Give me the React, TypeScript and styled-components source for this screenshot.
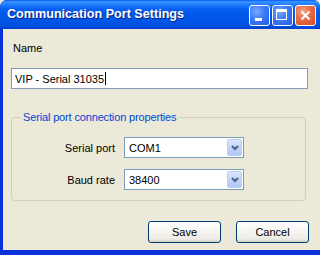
import React from 'react';
import styled, { createGlobalStyle } from 'styled-components';

const GlobalStyle = createGlobalStyle`
  html, body {
    margin: 0;
    padding: 0;
    background: #ece9d8;
  }
  body {
    font-family: Tahoma, "Liberation Sans", Arial, sans-serif;
    font-size: 11px;
  }
`;

const Window = styled.div`
  width: 320px;
  height: 255px;
  display: flex;
  flex-direction: column;
  overflow: hidden;
  background: #0831d9;
  border-radius: 7px 7px 0 0;
`;

const TitleBar = styled.div`
  height: 29px;
  flex: none;
  display: flex;
  align-items: center;
  padding: 0 4px 0 7px;
  background: linear-gradient(
    to bottom,
    #0058ee 0%,
    #3d93ff 6%,
    #2886ff 12%,
    #0a62f4 28%,
    #0058ea 50%,
    #0055e5 75%,
    #0050de 90%,
    #003dd2 100%
  );
`;

const Title = styled.div`
  flex: 1;
  color: #fff;
  font-family: "Liberation Sans", Arial, sans-serif;
  font-weight: bold;
  font-size: 12.6px;
  text-shadow: 1px 1px 0 #0a1e80;
  padding-bottom: 1px;
`;

const Controls = styled.div`
  display: flex;
  gap: 2px;
  margin-top: 1px;
`;

const CaptionButton = styled.div<{ $close?: boolean }>`
  position: relative;
  width: 21px;
  height: 21px;
  box-sizing: border-box;
  border: 1px solid #fff;
  border-radius: 3px;
  background: ${p =>
    p.$close
      ? 'radial-gradient(circle at 35% 30%, #f5a587 0%, #e66b43 45%, #d8491f 100%)'
      : 'radial-gradient(circle at 35% 30%, #7aa8ff 0%, #3b7bf7 45%, #2457e6 100%)'};
  display: flex;
  align-items: center;
  justify-content: center;
`;

const MinGlyph = styled.div`
  position: absolute;
  left: 5px;
  top: 12px;
  width: 7px;
  height: 3px;
  background: #fff;
`;

const MaxGlyph = styled.div`
  position: absolute;
  left: 3px;
  top: 3px;
  width: 11px;
  height: 11px;
  box-sizing: border-box;
  border: 1px solid #fff;
  border-top-width: 3px;
`;

const Body = styled.div`
  flex: 1;
  display: flex;
  flex-direction: column;
  margin: 0 0 5px 3px;
  padding: 13px 12px 0 8px;
  background: #ece9d8;
`;

const Label = styled.label`
  display: block;
  line-height: 13px;
  padding-left: 2px;
  color: #000;
`;

const TextBox = styled.div`
  margin-top: 13px;
  height: 21px;
  box-sizing: border-box;
  border: 1px solid #7f9db9;
  background: #fff;
  display: flex;
  align-items: center;
  padding-left: 3px;
  font-size: 11px;
  color: #000;
`;

const Caret = styled.span`
  display: inline-block;
  width: 1px;
  height: 13px;
  background: #000;
  margin-left: 1px;
`;

const GroupBox = styled.fieldset`
  margin: 22px 2px 0 0;
  padding: 13px 0 0 0;
  height: 90px;
  box-sizing: border-box;
  border: 1px solid #d0d0bf;
  border-radius: 4px;
`;

const Legend = styled.legend`
  color: #0046d5;
  padding: 0 2px;
  margin-left: 9px;
  line-height: 13px;
  letter-spacing: -0.15px;
`;

const FieldGrid = styled.div`
  display: grid;
  grid-template-columns: 103px 120px;
  column-gap: 9px;
  row-gap: 11px;
  align-items: center;
`;

const FieldLabel = styled.span`
  text-align: right;
  color: #000;
`;

const Combo = styled.div`
  height: 21px;
  box-sizing: border-box;
  border: 1px solid #7f9db9;
  background: #fff;
  display: flex;
  align-items: center;
  padding: 1px;
`;

const ComboText = styled.span`
  flex: 1;
  padding-left: 3px;
  color: #000;
`;

const DropButton = styled.div`
  width: 15px;
  height: 17px;
  box-sizing: border-box;
  border: 1px solid #bacdf6;
  border-radius: 2px;
  background: linear-gradient(to bottom, #dce6fd 0%, #c4d5fb 45%, #b2c8f8 100%);
  display: flex;
  align-items: center;
  justify-content: center;
`;

const Footer = styled.div`
  display: flex;
  justify-content: flex-end;
  gap: 15px;
  margin-top: 20px;
  margin-right: -1px;
`;

const Button = styled.button`
  width: 73px;
  height: 22px;
  box-sizing: border-box;
  border: 1px solid #003c74;
  border-radius: 3px;
  background: linear-gradient(to bottom, #ffffff 0%, #f5f4ef 50%, #ecebe6 85%, #d6d0c5 100%);
  font-family: Tahoma, "Liberation Sans", Arial, sans-serif;
  font-size: 11px;
  color: #000;
  padding: 0;
`;

const Chevron = () => (
  <svg width="8" height="6" viewBox="0 0 8 6">
    <path d="M1 1 L4 4 L7 1" fill="none" stroke="#4d6185" strokeWidth="2" />
  </svg>
);

const CloseGlyph = () => (
  <svg width="11" height="11" viewBox="0 0 11 11">
    <path d="M1.5 1.5 L9.5 9.5 M9.5 1.5 L1.5 9.5" stroke="#fff" strokeWidth="2" />
  </svg>
);

export default function App() {
  return (
    <>
      <GlobalStyle />
      <Window>
        <TitleBar>
          <Title>Communication Port Settings</Title>
          <Controls>
            <CaptionButton>
              <MinGlyph />
            </CaptionButton>
            <CaptionButton>
              <MaxGlyph />
            </CaptionButton>
            <CaptionButton $close>
              <CloseGlyph />
            </CaptionButton>
          </Controls>
        </TitleBar>
        <Body>
          <Label>Name</Label>
          <TextBox>
            VIP - Serial 31035
            <Caret />
          </TextBox>
          <GroupBox>
            <Legend>Serial port connection properties</Legend>
            <FieldGrid>
              <FieldLabel>Serial port</FieldLabel>
              <Combo>
                <ComboText>COM1</ComboText>
                <DropButton>
                  <Chevron />
                </DropButton>
              </Combo>
              <FieldLabel>Baud rate</FieldLabel>
              <Combo>
                <ComboText>38400</ComboText>
                <DropButton>
                  <Chevron />
                </DropButton>
              </Combo>
            </FieldGrid>
          </GroupBox>
          <Footer>
            <Button>Save</Button>
            <Button>Cancel</Button>
          </Footer>
        </Body>
      </Window>
    </>
  );
}
